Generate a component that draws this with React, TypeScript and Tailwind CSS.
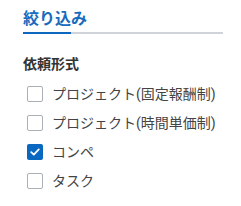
import React from "react";

const items = [
  { label: "プロジェクト(固定報酬制)", checked: false },
  { label: "プロジェクト(時間単価制)", checked: false },
  { label: "コンペ", checked: true },
  { label: "タスク", checked: false },
];

export default function App() {
  return (
    <div
      className="w-[241px] h-[206px] bg-white pl-[23px] pt-[7px]"
      style={{ fontFamily: 'Roboto, "Noto Sans CJK JP", sans-serif' }}
    >
      <div className="w-[200px]">
        <div className="text-[16px] leading-[24px] font-bold text-[#1a6bbd]">絞り込み</div>
        <div className="flex mt-[1px]">
          <div className="w-[48px] h-[2px] bg-[#0e67bf]" />
          <div className="flex-1 h-[2px] bg-[#d0d3d7]" />
        </div>
      </div>
      <div className="mt-[20px] text-[14px] leading-[20px] font-bold text-[#333]">依頼形式</div>
      <div className="mt-[5px] flex flex-col">
        {items.map((it) => (
          <div key={it.label} className="h-[29px] flex items-center pl-[4px] gap-[9px]">
            {it.checked ? (
              <div className="w-[16px] h-[16px] rounded-[2px] bg-[#0b68c0] flex items-center justify-center">
                <svg width="12" height="12" viewBox="0 0 12 12">
                  <path d="M2.2 6.2 L4.8 8.6 L9.8 3.4" stroke="white" strokeWidth="1.8" fill="none" strokeLinecap="round" strokeLinejoin="round" />
                </svg>
              </div>
            ) : (
              <div className="w-[16px] h-[16px] rounded-[2px] border border-[#a9b0b8] bg-white" />
            )}
            <span className="text-[14px] leading-[20px] text-[#444]">{it.label}</span>
          </div>
        ))}
      </div>
    </div>
  );
}
